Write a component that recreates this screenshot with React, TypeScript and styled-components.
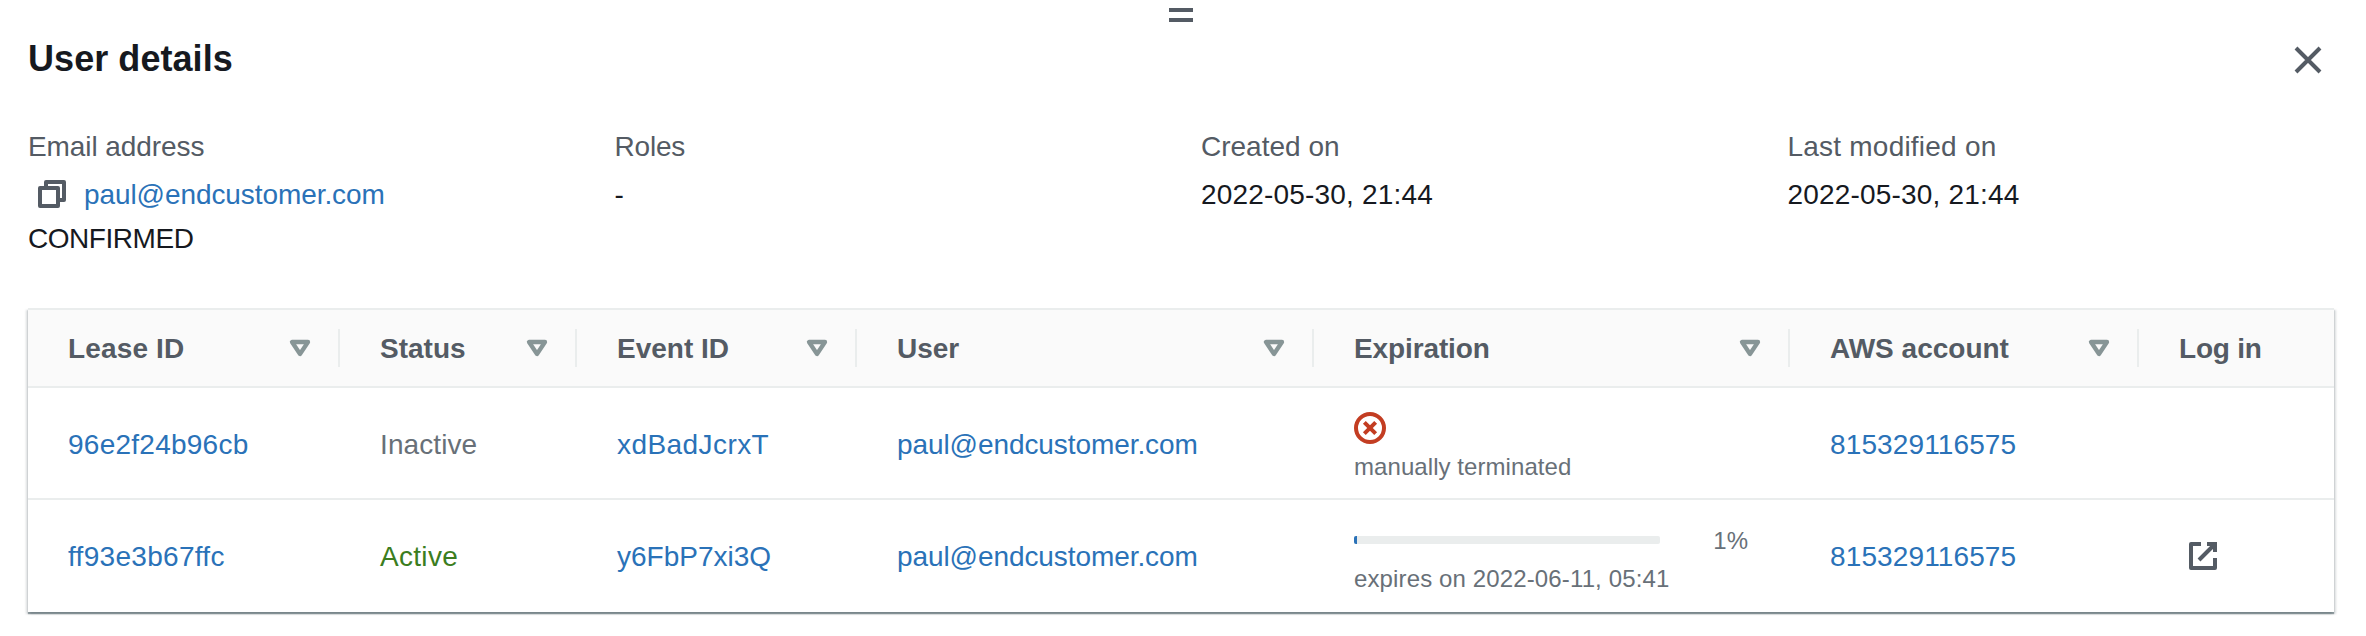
import React from "react";
import styled, { createGlobalStyle } from "styled-components";

const Global = createGlobalStyle`
  * { box-sizing: border-box; }
  body {
    margin: 0;
    background: #fff;
    color: #16191f;
    font-family: "Liberation Sans", Arial, sans-serif;
    font-size: 28px;
    line-height: 44px;
  }
`;

const Panel = styled.section`
  height: 636px;
  padding: 0 32px 0 28px;
  overflow: hidden;
`;

const DragHandle = styled.div`
  width: 24px;
  height: 14px;
  margin: 8px auto 0 1141px;
  border: solid #545b64;
  border-width: 4px 0;
`;

const Header = styled.header`
  display: flex;
  justify-content: space-between;
  align-items: center;
  height: 44px;
  margin-top: 16px;
  padding-right: 10px;
`;

const Title = styled.h2`
  margin: 0;
  padding-bottom: 2px;
  font-size: 36px;
  font-weight: 700;
  line-height: 44px;
  letter-spacing: 0.06px;
`;

const IconButton = styled.button`
  display: block;
  padding: 0;
  border: 0;
  background: none;
  line-height: 0;
  color: #545b64;
`;

const Icon = styled.svg`
  display: block;
  width: 32px;
  height: 32px;
  fill: none;
  stroke: currentColor;
  stroke-width: 2;
`;

const Facts = styled.dl`
  display: grid;
  grid-template-columns: repeat(4, 586.5px);
  height: 132px;
  margin: 42px 0 52px;
`;

const Fact = styled.div``;

const Label = styled.dt`
  display: flex;
  align-items: center;
  height: 44px;
  margin-bottom: 4px;
  color: #545b64;
`;

const Value = styled.dd`
  display: flex;
  align-items: center;
  height: 44px;
  margin: 0;
`;

const CopySlot = styled.span`
  display: flex;
  padding: 0 16px 0 8px;
  color: #545b64;
`;

const Text = styled.span<{ $track?: number }>`
  display: block;
  padding-top: 2px;
  letter-spacing: ${(p) => p.$track ?? 0}px;
  white-space: nowrap;
`;

const Link = styled(Text).attrs({ as: "a" })`
  color: #2a72b8;
`;

const Table = styled.div`
  border-top: 2px solid #eaeded;
  background: #fff;
  box-shadow:
    0 2px 1px 0 rgba(0, 28, 36, 0.36),
    2px 2px 2px 0 rgba(0, 28, 36, 0.15),
    -2px 2px 2px 0 rgba(0, 28, 36, 0.15);
`;

const Row = styled.div`
  display: grid;
  grid-template-columns: 312px 237px 280px 457px 476px 349px 195px;
  height: 114px;
  border-top: 2px solid #eaeded;
`;

const HeadRow = styled(Row)`
  height: 78px;
  border-top: 0;
  border-bottom: 2px solid #eaeded;
  background: #fafafa;
  & + ${Row} {
    height: 110px;
    padding-top: 2px;
    border-top: 0;
  }
`;

const HeadCell = styled.div`
  display: flex;
  justify-content: space-between;
  align-items: center;
  height: 38px;
  margin-top: 19px;
  padding: 0 22px 0 40px;
  border-right: 2px solid #eaeded;
  color: #545b64;
  font-weight: 700;
  &:last-child { border-right: 0; }
`;

const SortIcon = styled(Icon)`
  color: #879596;
  stroke-width: 2.15;
`;

const Cell = styled.div`
  display: flex;
  flex-direction: column;
  justify-content: center;
  align-items: flex-start;
  padding-left: 40px;
`;

const Status = styled(Text)<{ $active?: boolean }>`
  color: ${(p) => (p.$active ? "#3b7d20" : "#687078")};
`;

const Expiry = styled.div`
  display: flex;
  flex-direction: column;
  width: 394px;
  height: 84px;
  padding-top: 8px;
  color: #687078;
  font-size: 24px;
  line-height: 32px;
`;

const ErrorIcon = styled(Icon)`
  color: #c33d22;
`;

const ExpiryTop = styled.div`
  display: flex;
  align-items: center;
  justify-content: space-between;
  height: 36px;
`;

const ExpiryNote = styled.div`
  height: 40px;
  padding-top: 3px;
`;

const Track = styled.div`
  width: 306px;
  height: 8px;
  border-radius: 2px;
  background: #eaeded;
  overflow: hidden;
`;

const Fill = styled.div`
  height: 8px;
  background: #2a72b8;
`;

const LoginButton = styled(IconButton)`
  margin-left: 8px;
`;

const headings: { name: string; track?: number; plain?: boolean }[] = [
  { name: "Lease ID", track: 0.15 },
  { name: "Status" },
  { name: "Event ID" },
  { name: "User" },
  { name: "Expiration", track: -0.12 },
  { name: "AWS account" },
  { name: "Log in", track: -0.2, plain: true },
];

const leases = [
  { id: "96e2f24b96cb", idTrack: 0.25, active: false, event: "xdBadJcrxT", eventTrack: 0.43 },
  { id: "ff93e3b67ffc", idTrack: 0.3, active: true, event: "y6FbP7xi3Q", eventTrack: 0 },
];

const progress = 1;

export default function App() {
  return (
    <>
      <Global />
      <Panel>
        <DragHandle />
        <Header>
          <Title>User details</Title>
          <IconButton aria-label="Close">
            <Icon viewBox="0 0 16 16"><path d="M2 2l12 12M14 2L2 14" /></Icon>
          </IconButton>
        </Header>
        <Facts>
          <Fact>
            <Label><Text $track={-0.08}>Email address</Text></Label>
            <Value>
              <CopySlot>
                <Icon viewBox="0 0 16 16" strokeLinejoin="round">
                  <path d="M2 5h9v9H2zM5 5V2h9v9h-3" />
                </Icon>
              </CopySlot>
              <Link $track={-0.08}>paul@endcustomer.com</Link>
            </Value>
            <Value><Text $track={-0.45}>CONFIRMED</Text></Value>
          </Fact>
          <Fact>
            <Label><Text $track={-0.2}>Roles</Text></Label>
            <Value><Text>-</Text></Value>
          </Fact>
          <Fact>
            <Label><Text>Created on</Text></Label>
            <Value><Text $track={0.18}>2022-05-30, 21:44</Text></Value>
          </Fact>
          <Fact>
            <Label><Text $track={0.22}>Last modified on</Text></Label>
            <Value><Text $track={0.18}>2022-05-30, 21:44</Text></Value>
          </Fact>
        </Facts>
        <Table>
          <HeadRow>
            {headings.map((h) => (
              <HeadCell key={h.name}>
                <Text $track={h.track}>{h.name}</Text>
                {!h.plain && (
                  <SortIcon viewBox="0 0 16 16" strokeLinejoin="round">
                    <path d="M4 5h8l-4 6z" />
                  </SortIcon>
                )}
              </HeadCell>
            ))}
          </HeadRow>
          {leases.map((l) => (
            <Row key={l.id}>
              <Cell><Link $track={l.idTrack}>{l.id}</Link></Cell>
              <Cell>
                <Status $active={l.active} $track={l.active ? 0.3 : 0.1}>
                  {l.active ? "Active" : "Inactive"}
                </Status>
              </Cell>
              <Cell><Link $track={l.eventTrack}>{l.event}</Link></Cell>
              <Cell><Link $track={-0.08}>paul@endcustomer.com</Link></Cell>
              <Cell>
                <Expiry>
                  <ExpiryTop>
                    {l.active ? (
                      <>
                        <Track><Fill style={{ width: `${progress}%` }} /></Track>
                        <Text>{progress}%</Text>
                      </>
                    ) : (
                      <ErrorIcon viewBox="0 0 16 16">
                        <circle cx="8" cy="8" r="7" />
                        <path d="M10.83 5.17l-5.66 5.66M5.17 5.17l5.66 5.66" />
                      </ErrorIcon>
                    )}
                  </ExpiryTop>
                  <ExpiryNote>
                    <Text $track={l.active ? 0.13 : 0.07}>
                      {l.active ? "expires on 2022-06-11, 05:41" : "manually terminated"}
                    </Text>
                  </ExpiryNote>
                </Expiry>
              </Cell>
              <Cell><Link $track={0.12}>815329116575</Link></Cell>
              <Cell>
                {l.active && (
                  <LoginButton aria-label="Log in">
                    <Icon viewBox="0 0 16 16" strokeLinejoin="round">
                      <path d="M10 2h4v4" strokeLinejoin="miter" />
                      <path d="M6 10l8-8M14 9v5H2V2h5" />
                    </Icon>
                  </LoginButton>
                )}
              </Cell>
            </Row>
          ))}
        </Table>
      </Panel>
    </>
  );
}
